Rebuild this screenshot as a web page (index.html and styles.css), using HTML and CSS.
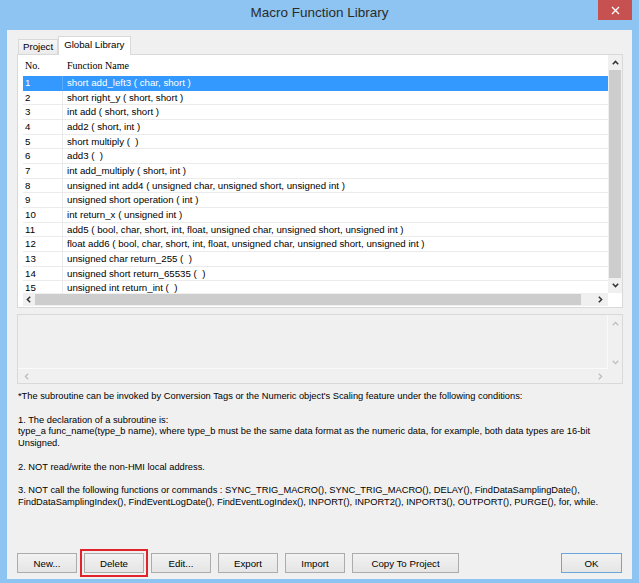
FILE: index.html
```html
<!DOCTYPE html>
<html lang="en">
<head>
    <meta charset="UTF-8">
    <title>Macro Function Library</title>
    <link rel="stylesheet" href="styles.css">
</head>
<body>
    <div class="window">
        <div class="titlebar">
            <span></span>
            <span class="title">Macro Function Library</span>
            <span class="close">
                <svg width="9" height="9" viewBox="0 0 9 9"><path d="M1 1L8 8M8 1L1 8" stroke="#fff" stroke-width="1.3" fill="none"/></svg>
            </span>
        </div>
        <div class="client">
            <div class="tabs">
                <div class="tab">Project</div>
                <div class="tab active">Global Library</div>
            </div>
            <div class="pane">
                <div class="listview">
                    <div class="lv-main">
                        <div class="lv-body">
                            <div class="lv-head"><span class="c-no">No.</span><span class="c-name">Function Name</span></div>
                            <div class="row sel"><span class="c-no">1</span><span class="c-name">short add_left3 ( char, short )</span></div>
                            <div class="row"><span class="c-no">2</span><span class="c-name">short right_y ( short, short )</span></div>
                            <div class="row"><span class="c-no">3</span><span class="c-name">int add ( short, short )</span></div>
                            <div class="row"><span class="c-no">4</span><span class="c-name">add2 ( short, int )</span></div>
                            <div class="row"><span class="c-no">5</span><span class="c-name">short multiply (  )</span></div>
                            <div class="row"><span class="c-no">6</span><span class="c-name">add3 (  )</span></div>
                            <div class="row"><span class="c-no">7</span><span class="c-name">int add_multiply ( short, int )</span></div>
                            <div class="row"><span class="c-no">8</span><span class="c-name">unsigned int add4 ( unsigned char, unsigned short, unsigned int )</span></div>
                            <div class="row"><span class="c-no">9</span><span class="c-name">unsigned short operation ( int )</span></div>
                            <div class="row"><span class="c-no">10</span><span class="c-name">int return_x ( unsigned int )</span></div>
                            <div class="row"><span class="c-no">11</span><span class="c-name">add5 ( bool, char, short, int, float, unsigned char, unsigned short, unsigned int )</span></div>
                            <div class="row"><span class="c-no">12</span><span class="c-name">float add6 ( bool, char, short, int, float, unsigned char, unsigned short, unsigned int )</span></div>
                            <div class="row"><span class="c-no">13</span><span class="c-name">unsigned char return_255 (  )</span></div>
                            <div class="row"><span class="c-no">14</span><span class="c-name">unsigned short return_65535 (  )</span></div>
                            <div class="row"><span class="c-no">15</span><span class="c-name">unsigned int return_int (  )</span></div>
                        </div>
                        <div class="vscroll">
                            <span class="arrow"><svg width="7" height="5" viewBox="0 0 7 5"><path d="M0.8 4.2L3.5 1.4L6.2 4.2" stroke="#333" stroke-width="1.5" fill="none"/></svg></span>
                            <span class="thumb"></span>
                            <span class="arrow"><svg width="7" height="5" viewBox="0 0 7 5"><path d="M0.8 0.8L3.5 3.6L6.2 0.8" stroke="#333" stroke-width="1.5" fill="none"/></svg></span>
                        </div>
                    </div>
                    <div class="hscroll">
                        <span class="arrow left"><svg width="5" height="7" viewBox="0 0 5 7"><path d="M4.2 0.8L1.4 3.5L4.2 6.2" stroke="#333" stroke-width="1.5" fill="none"/></svg></span>
                        <span class="thumb"></span>
                        <span class="track"></span>
                        <span class="arrow right"><svg width="5" height="7" viewBox="0 0 5 7"><path d="M0.8 0.8L3.6 3.5L0.8 6.2" stroke="#333" stroke-width="1.5" fill="none"/></svg></span>
                        <span class="corner"></span>
                    </div>
                </div>
            </div>

            <div class="descbox">
                <div class="desc-text"></div>
                <div class="desc-vscroll">
                    <svg width="7" height="5" viewBox="0 0 7 5"><path d="M0.8 4.2L3.5 1.4L6.2 4.2" stroke="#bdbdbd" stroke-width="1.3" fill="none"/></svg>
                    <svg width="7" height="5" viewBox="0 0 7 5"><path d="M0.8 0.8L3.5 3.6L6.2 0.8" stroke="#bdbdbd" stroke-width="1.3" fill="none"/></svg>
                </div>
                <div class="desc-hscroll">
                    <svg width="5" height="7" viewBox="0 0 5 7"><path d="M4.2 0.8L1.4 3.5L4.2 6.2" stroke="#bdbdbd" stroke-width="1.3" fill="none"/></svg>
                    <svg width="5" height="7" viewBox="0 0 5 7"><path d="M0.8 0.8L3.6 3.5L0.8 6.2" stroke="#bdbdbd" stroke-width="1.3" fill="none"/></svg>
                </div>
                <div class="desc-corner"></div>
            </div>

            <div class="notes">
                <p>*The subroutine can be invoked by Conversion Tags or the Numeric object's Scaling feature under the following conditions:</p>
                <p>1. The declaration of a subroutine is:<br>type_a func_name(type_b name), where type_b must be the same data format as the numeric data, for example, both data types are 16-bit<br>Unsigned.</p>
                <p>2. NOT read/write the non-HMI local address.</p>
                <p>3. NOT call the following functions or commands : SYNC_TRIG_MACRO(), SYNC_TRIG_MACRO(), DELAY(), FindDataSamplingDate(),<br>FindDataSamplingIndex(), FindEventLogDate(), FindEventLogIndex(), INPORT(), INPORT2(), INPORT3(), OUTPORT(), PURGE(), for, while.</p>
            </div>

            <div class="buttons">
                <button class="btn">New...</button>
                <button class="btn marked">Delete</button>
                <button class="btn">Edit...</button>
                <button class="btn">Export</button>
                <button class="btn">Import</button>
                <button class="btn wide">Copy To Project</button>
                <button class="btn ok">OK</button>
            </div>
        </div>
    </div>
</body>
</html>
```

FILE: styles.css
```css
* {
    box-sizing: border-box;
}
body {
    margin: 0;
    font-family: "Liberation Sans", Arial, sans-serif;
    font-size: 9.7px;
    color: #000;
}
.window {
    width: 639px;
    height: 583px;
    background: #8dc4f1;
    display: flex;
    flex-direction: column;
    padding: 0 7px 4px;
}
.titlebar {
    height: 30px;
    display: grid;
    grid-template-columns: 1fr auto 1fr;
    align-items: start;
}
.title {
    font-size: 13.5px;
    color: #2b2b2b;
    padding-top: 5px;
}
.close {
    justify-self: end;
    width: 34px;
    height: 20px;
    background: #c75050;
    display: flex;
    align-items: center;
    justify-content: center;
}
.client {
    flex: 1;
    background: #f0f0f0;
    display: flex;
    flex-direction: column;
    padding: 0 9px 6px 10px;
}

/* tabs */
.tabs {
    height: 24px;
    display: flex;
    align-items: flex-end;
    padding-left: 1px;
}
.tab {
    height: 15px;
    padding: 0 4px;
    line-height: 14px;
    border: 1px solid #d9d9d9;
    border-bottom: none;
    background: linear-gradient(#f6f6f6, #ebebeb);
}
.tab.active {
    height: 19px;
    padding: 0 6px 0 5px;
    line-height: 16px;
    background: #fff;
    margin-bottom: -1px;
    position: relative;
    z-index: 1;
}
.pane {
    height: 254px;
    border: 1px solid #d9d9d9;
    background: #fff;
    padding: 0 0 1px 5px;
    display: flex;
}

/* list view */
.listview {
    flex: 1;
    display: flex;
    flex-direction: column;
}
.lv-main {
    flex: 1;
    display: flex;
    min-height: 0;
}
.lv-body {
    flex: 1;
    overflow: hidden;
}
.lv-head {
    height: 21px;
    display: flex;
    align-items: center;
    font-family: "Liberation Serif", "Times New Roman", serif;
    font-size: 10px;
}
.lv-head .c-no {
    border-right-color: transparent;
}
.row {
    height: 14.67px;
    display: flex;
    align-items: stretch;
    border-bottom: 1px solid #ebebeb;
    line-height: 13.67px;
}
.c-no {
    width: 40px;
    padding-left: 2px;
    border-right: 1px solid #ebebeb;
}
.c-name {
    padding-left: 4px;
    white-space: pre;
}
.row.sel {
    background: #3399ff;
    color: #fff;
    border-bottom-color: #3399ff;
}
.row.sel .c-no {
    border-right-color: #5aaeff;
}
.vscroll {
    width: 14px;
    display: flex;
    flex-direction: column;
    background: #f0f0f0;
}
.vscroll .arrow {
    height: 15px;
    display: flex;
    align-items: center;
    justify-content: center;
}
.vscroll .thumb {
    flex: 1;
    margin: 0 1px;
    background: #cdcdcd;
}
.hscroll {
    height: 13px;
    display: flex;
    background: #f0f0f0;
}
.hscroll .arrow {
    display: flex;
    align-items: center;
}
.hscroll .left {
    width: 12px;
    padding-left: 3px;
}
.hscroll .right {
    width: 15px;
    justify-content: center;
}
.hscroll .thumb {
    width: 546px;
    margin: 1px 0;
    background: #cdcdcd;
}
.hscroll .track {
    flex: 1;
}
.hscroll .corner {
    width: 14px;
    background: #fff;
}

/* description box */
.descbox {
    margin-top: 6px;
    height: 70px;
    border: 1px solid #d9d9d9;
    background: #f0f0f0;
    display: grid;
    grid-template-columns: 1fr 14px;
    grid-template-rows: 1fr 14px;
}
.desc-text {
    border-right: 1px solid #fafafa;
    border-bottom: 1px solid #fafafa;
}
.desc-vscroll {
    display: flex;
    flex-direction: column;
    justify-content: space-between;
    align-items: center;
    padding: 6px 0 4px;
}
.desc-hscroll {
    display: flex;
    justify-content: space-between;
    align-items: center;
    padding: 0 5px 0 6px;
}

/* notes */
.notes {
    margin-top: 7px;
    font-size: 9.3px;
    line-height: 11.8px;
    padding-left: 1px;
}
.notes p {
    margin: 0 0 11.8px;
    white-space: nowrap;
}
.notes p:last-child {
    margin-bottom: 0;
}

/* buttons */
.buttons {
    margin-top: auto;
    display: flex;
    gap: 7px;
    padding-right: 1px;
}
.btn {
    width: 60px;
    height: 20px;
    padding: 0;
    border: 1px solid #acacac;
    background: linear-gradient(#f2f2f2, #e5e5e5);
    font-family: "Liberation Sans", Arial, sans-serif;
    font-size: 9.7px;
    color: #000;
}
.btn.wide {
    width: 107px;
}
.btn.ok {
    margin-left: auto;
    width: 61px;
    border-color: #6aa6dc;
}
.btn.marked {
    outline: 2px solid #e0242a;
    outline-offset: 2px;
}
```
